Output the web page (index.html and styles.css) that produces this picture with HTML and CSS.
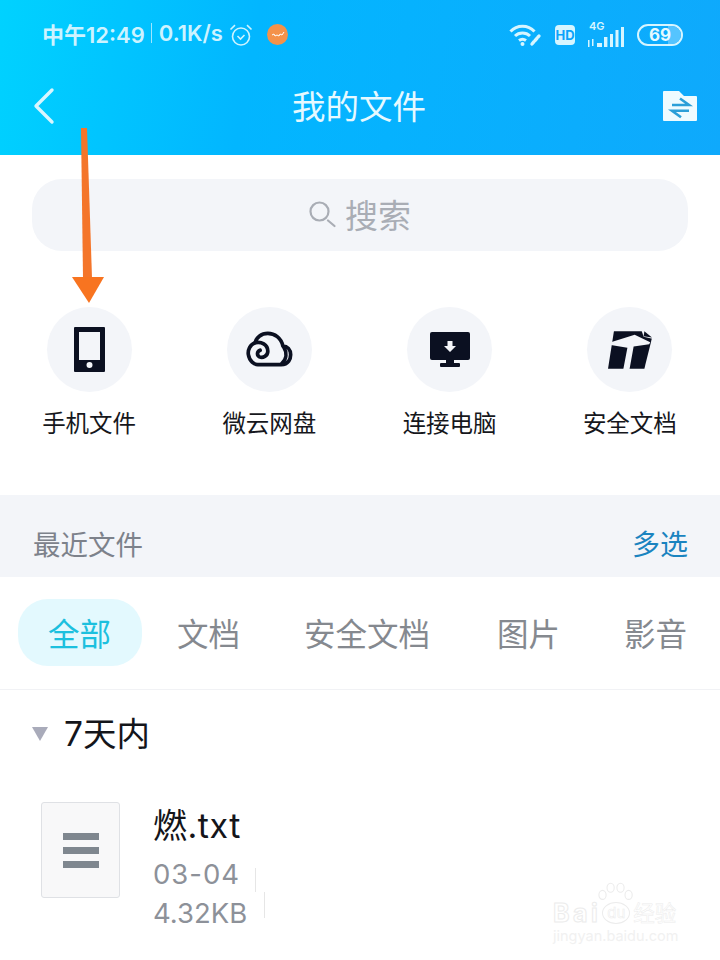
FILE: index.html
```html
<!DOCTYPE html>
<html lang="zh-CN">
<head>
    <meta charset="UTF-8">
    <meta name="viewport" content="width=device-width, initial-scale=1.0">
    <title>我的文件</title>
    <link rel="stylesheet" href="styles.css">
</head>
<body>
    <div class="phone">
        <!-- Header -->
        <div class="header">
            <div class="status-bar">
                <div class="status-left">
                    <span class="status-time">中午12:49</span>
                    <span class="status-sep"></span>
                    <span class="status-speed">0.1K/s</span>
                    <svg class="alarm" width="24" height="24" viewBox="0 0 24 24" fill="none" stroke="#cdf3ff" stroke-width="1.6">
                        <circle cx="12" cy="13.500" r="8.500"/>
                        <path d="M8.500 13l3 3 4-4"/>
                        <path d="M1.500 6.500L6 2.200M22.500 6.500L18 2.200"/>
                    </svg>
                    <span class="app-dot">
                        <svg width="21" height="21" viewBox="0 0 21 21" fill="none" stroke="#fff" stroke-width="1">
                            <path d="M5 11l2-1 1 2 2-1 2 1 1-2 2 1 2-3"/>
                        </svg>
                    </span>
                </div>
                <div class="status-right">
                    <svg width="34" height="24" viewBox="0 0 34 24" fill="none" stroke="#d6f5ff" stroke-width="3">
                        <path d="M1.500 8.500C8 1.500 19 1.500 25.500 8.500"/>
                        <path d="M6 13C10 9 17 9 21 13"/>
                        <path d="M10 17.500C12 16 15 16 17 17.500"/>
                        <circle cx="13.500" cy="21" r="2" fill="#d6f5ff" stroke="none"/>
                        <path d="M23 21l7-8" stroke-width="3.400" stroke-linecap="round" stroke-dasharray="3 1.500"/>
                    </svg>
                    <span class="hd-badge">HD</span>
                    <div class="signal">
                        <span class="signal-label">4G</span>
                        <svg width="38" height="22" viewBox="0 0 38 22" fill="#d6f5ff">
                            <rect x="1" y="15" width="1.500" height="7"/>
                            <rect x="5" y="14" width="1.500" height="7"/>
                            <rect x="10" y="18" width="5" height="4"/>
                            <rect x="17" y="12" width="3.400" height="10"/>
                            <rect x="23" y="9" width="3" height="13"/>
                            <rect x="28.500" y="5" width="3" height="17"/>
                            <rect x="34" y="2" width="3" height="20"/>
                        </svg>
                    </div>
                    <div class="battery">
                        <span class="battery-fill"></span>
                        <span class="battery-text">69</span>
                    </div>
                </div>
            </div>
            <div class="title-bar">
                <svg class="back" width="24" height="38" viewBox="0 0 24 38" fill="none" stroke="#d9f6ff" stroke-width="3.400" stroke-linecap="round" stroke-linejoin="round">
                    <path d="M20 3L4 19l16 16"/>
                </svg>
                <span class="title">我的文件</span>
                <svg class="folder" width="36" height="32" viewBox="0 0 36 32">
                    <path d="M1 2a1 1 0 0 1 1-1h15l5 5h12a1 1 0 0 1 1 1v23a1 1 0 0 1-1 1H2a1 1 0 0 1-1-1z" fill="#eefbff"/>
                    <path d="M10 15h17l-9-6.500M27 20.700H10l9 6.500" fill="none" stroke="#2b9fd8" stroke-width="2.600"/>
                </svg>
            </div>
        </div>

        <!-- Search -->
        <div class="search-wrap">
            <div class="search">
                <svg width="27" height="27" viewBox="0 0 27 27" fill="none" stroke="#a9adb5" stroke-width="2.200" stroke-linecap="round">
                    <circle cx="10.500" cy="10.500" r="9"/>
                    <path d="M19 19.500l6.500 5.500"/>
                </svg>
                <span>搜索</span>
            </div>
        </div>

        <!-- Entries -->
        <div class="entries">
            <div class="entry">
                <div class="entry-icon">
                    <svg width="31" height="45" viewBox="0 0 31 45">
                        <path fill-rule="evenodd" fill="#0b1021" d="M1 0h29a1 1 0 0 1 1 1v43a1 1 0 0 1-1 1H1a1 1 0 0 1-1-1V1a1 1 0 0 1 1-1zM5 5v28h21V5zM15.500 35a3 3 0 1 0 0 6 3 3 0 0 0 0-6z"/>
                    </svg>
                </div>
                <div class="entry-label">手机文件</div>
            </div>
            <div class="entry">
                <div class="entry-icon">
                    <svg width="47" height="37" viewBox="20 15 140 110" fill="none" stroke="#0b1021" stroke-width="11" stroke-linecap="round" stroke-linejoin="round">
                        <path d="M55 115H125C147 115 153 97 153 86C153 70 143 60 130 60C125 35 105 22 85 22C65 22 50 35 47 50C32 55 25 72 27 85C30 105 45 115 55 115z"/>
                        <path d="M47 50C65 45 85 55 85 75C85 90 70 96 60 92C52 88 52 76 62 72"/>
                        <path d="M132 62C142 78 142 98 126 113"/>
                    </svg>
                </div>
                <div class="entry-label">微云网盘</div>
            </div>
            <div class="entry">
                <div class="entry-icon">
                    <svg width="40" height="35" viewBox="0 0 40 35">
                        <rect width="40" height="28" rx="2" fill="#0b1021"/>
                        <rect x="16" y="28" width="8" height="4" fill="#0b1021"/>
                        <rect x="10" y="31" width="20" height="4" rx="1" fill="#0b1021"/>
                        <path d="M17.500 9h5v5h3.500l-6 6-6-6h3.500z" fill="#f3f5f9"/>
                    </svg>
                </div>
                <div class="entry-label">连接电脑</div>
            </div>
            <div class="entry">
                <div class="entry-icon">
                    <svg width="46" height="41" viewBox="25 22 133 118">
                        <path d="M45 28H128L155 48L133 137H28z" fill="#0b1021"/>
                        <path d="M36 60L105 38L150 60L147 66L102 72L90 139H72L84 76L36 68z" fill="#f3f5f9"/>
                        <path d="M124 24L131 44L156 50L158 40L136 24z" fill="#f3f5f9"/>
                        <path d="M133 28L155 46L131 43z" fill="#0b1021"/>
                    </svg>
                </div>
                <div class="entry-label">安全文档</div>
            </div>
        </div>

        <!-- Recent -->
        <div class="recent-head">
            <span class="recent-title">最近文件</span>
            <span class="recent-select">多选</span>
        </div>

        <div class="tabs">
            <span class="tab active">全部</span>
            <span class="tab">文档</span>
            <span class="tab">安全文档</span>
            <span class="tab">图片</span>
            <span class="tab">影音</span>
        </div>

        <div class="group-head">
            <span class="caret"></span>
            <span class="group-title">7天内</span>
        </div>

        <div class="file-row">
            <div class="file-thumb">
                <span></span><span></span><span></span>
            </div>
            <div class="file-info">
                <div class="file-name">燃.txt</div>
                <div class="file-meta file-date">03-04</div>
                <div class="file-meta">4.32KB</div>
            </div>
        </div>

        <!-- Annotation arrow -->
        <svg class="arrow" width="40" height="180" viewBox="0 0 40 180">
            <path d="M13 0h6l5 150h-9z" fill="#f4752a"/>
            <path d="M4 149h32l-15 26z" fill="#f87420"/>
        </svg>

        <!-- Faint marks left over the file row -->
        <span class="smudge smudge-a"></span>
        <span class="smudge smudge-b"></span>

        <!-- Watermark -->
        <div class="watermark">
            <svg class="wm-paw" width="36" height="24" viewBox="0 0 40 26" fill="none" stroke="#ececec" stroke-width="1.200">
                <ellipse cx="5" cy="14" rx="4" ry="5"/>
                <ellipse cx="14" cy="6" rx="4" ry="5"/>
                <ellipse cx="25" cy="6" rx="4" ry="5"/>
                <ellipse cx="34" cy="14" rx="4" ry="5"/>
            </svg>
            <div class="wm-top">
                <span class="wm-bai">Bai</span>
                <span class="wm-du">du</span>
                <span class="wm-cn">经验</span>
            </div>
            <div class="wm-url">jingyan.baidu.com</div>
        </div>
    </div>
</body>
</html>
```

FILE: styles.css
```css
* {
    box-sizing: border-box;
}

body {
    margin: 0;
    background: #fff;
    font-family: "Inter", "Noto Sans CJK SC", sans-serif;
}

.phone {
    position: relative;
    width: 720px;
    height: 960px;
    overflow: hidden;
    background: #fff;
}

.header {
    height: 155px;
    background: linear-gradient(100deg, #00d2ff 0%, #02b6ff 35%, #0fa9fc 100%);
}

.status-bar {
    display: flex;
    justify-content: space-between;
    align-items: center;
    height: 66px;
    padding: 0 37px 0 42px;
    color: #cdf3ff;
}

.status-left {
    display: flex;
    align-items: center;
    font-size: 22px;
    font-weight: 600;
}

.status-sep {
    width: 1px;
    height: 20px;
    margin: 0 7px 0 6px;
    background: #9fe6ff;
}

.alarm {
    margin: 3px 0 0 6px;
}

.app-dot {
    width: 21px;
    height: 21px;
    margin: 2px 0 0 14px;
    border-radius: 50%;
    background: #f4924a;
}

.app-dot svg {
    display: block;
}

.status-right {
    display: flex;
    align-items: center;
    gap: 12px;
    margin-top: 4px;
}

.hd-badge {
    width: 20px;
    height: 20px;
    border-radius: 4px;
    background: #d6f5ff;
    color: #0aa3fb;
    font-size: 13px;
    font-weight: 700;
    line-height: 20px;
    text-align: center;
}

.signal {
    position: relative;
    height: 24px;
    display: flex;
    align-items: flex-end;
}

.signal-label {
    position: absolute;
    left: 2px;
    top: -4px;
    font-size: 11px;
    font-weight: 600;
    color: #d6f5ff;
}

.battery {
    position: relative;
    width: 46px;
    height: 22px;
    border: 2px solid #d6f5ff;
    border-radius: 11px;
    overflow: hidden;
    text-align: center;
}

.battery-fill {
    position: absolute;
    right: 0;
    top: 0;
    bottom: 0;
    width: 32%;
    background: #55c4ff;
}

.battery-text {
    position: relative;
    display: block;
    font-size: 17px;
    font-weight: 700;
    line-height: 18px;
    color: #e6f9ff;
}

.title-bar {
    display: flex;
    justify-content: space-between;
    align-items: center;
    height: 80px;
    padding: 0 22px 0 32px;
}

.title {
    margin-bottom: 4px;
    font-size: 33.500px;
    color: #e6f9ff;
}

.search-wrap {
    padding: 24px 32px 0;
}

.search {
    display: flex;
    justify-content: center;
    align-items: center;
    gap: 9px;
    height: 72px;
    padding-bottom: 2px;
    border-radius: 30px;
    background: #f3f5f9;
    color: #a9adb5;
    font-size: 33px;
}

.entries {
    display: grid;
    grid-template-columns: repeat(4, 1fr);
    height: 244px;
    margin-left: -1px;
    padding-top: 56px;
}

.entry {
    display: flex;
    flex-direction: column;
    align-items: center;
}

.entry-icon {
    display: flex;
    justify-content: center;
    align-items: center;
    width: 85px;
    height: 85px;
    border-radius: 50%;
    background: #f3f5f9;
}

.entry-label {
    margin-top: 15px;
    font-size: 23.500px;
    line-height: 34px;
    color: #16171c;
    white-space: nowrap;
}

.recent-head {
    display: flex;
    justify-content: space-between;
    align-items: center;
    height: 82px;
    padding: 14px 32px 0 33px;
    background: #f3f5f9;
}

.recent-title {
    font-size: 27.500px;
    color: #7d828b;
}

.recent-select {
    font-size: 28px;
    color: #1a84c0;
}

.tabs {
    display: flex;
    align-items: center;
    height: 113px;
    padding: 0 0 1px 18px;
    border-bottom: 1px solid #f1f2f5;
    font-size: 31.500px;
    color: #85898f;
    white-space: nowrap;
}

.tab {
    height: 67px;
    padding: 0 32px;
    line-height: 71px;
}

.tab:nth-child(4) {
    margin-left: 3px;
}

.tab.active {
    margin-right: 3px;
    padding: 0 31px 0 30px;
    border-radius: 30px;
    background: #e3f9fe;
    color: #1cc0de;
}

.group-head {
    display: flex;
    align-items: center;
    height: 88px;
    padding: 0 0 5px 32px;
}

.caret {
    width: 0;
    height: 0;
    margin: 5px 16px 0 0;
    border-left: 8.500px solid transparent;
    border-right: 8.500px solid transparent;
    border-top: 14px solid #a9abba;
}

.group-title {
    font-size: 33.500px;
    color: #14151a;
}

.file-row {
    display: flex;
    padding: 24px 0 0 41px;
}

.file-thumb {
    display: flex;
    flex-direction: column;
    justify-content: center;
    align-items: center;
    gap: 7px;
    width: 79px;
    height: 96px;
    border: 1px solid #dfe1e5;
    border-radius: 3px;
    background: #f8f8f9;
}

.file-thumb span {
    width: 36px;
    height: 7px;
    background: #7f878f;
}

.file-info {
    margin-left: 33px;
    margin-top: -2px;
}

.file-name {
    font-size: 34px;
    line-height: 51px;
    letter-spacing: 0.5px;
    color: #14151a;
}

.file-meta {
    font-size: 27.500px;
    line-height: 39px;
    color: #8d9199;
}

.file-date {
    margin-top: 4px;
    letter-spacing: 1px;
}

.arrow {
    position: absolute;
    left: 68px;
    top: 128px;
}

.smudge {
    position: absolute;
    width: 1px;
    background: #e6e6e6;
}

.smudge-a {
    left: 255px;
    top: 868px;
    height: 24px;
}

.smudge-b {
    left: 264px;
    top: 892px;
    height: 26px;
}

.watermark {
    position: absolute;
    left: 553px;
    top: 880px;
    width: 130px;
    color: #f1f1f1;
}

.wm-paw {
    position: absolute;
    left: 45px;
    top: 2px;
}

.wm-top {
    display: flex;
    align-items: center;
    height: 26px;
    margin-top: 20px;
    font-size: 25px;
    font-weight: 700;
    line-height: 26px;
    color: transparent;
    -webkit-text-stroke: 1px #ececec;
}

.wm-bai {
    letter-spacing: 3.500px;
}

.wm-du {
    width: 28px;
    height: 22px;
    margin-left: 1px;
    border: 1px solid #ececec;
    border-radius: 50%;
    font-size: 15px;
    font-weight: 400;
    line-height: 20px;
    text-align: center;
    -webkit-text-stroke: 0.5px #ececec;
}

.wm-cn {
    margin-left: 3px;
    font-size: 21.500px;
    font-weight: 400;
    -webkit-text-stroke: 0.5px #ececec;
}

.wm-url {
    margin-top: 1px;
    font-size: 14.500px;
    line-height: 18px;
    white-space: nowrap;
}
```
